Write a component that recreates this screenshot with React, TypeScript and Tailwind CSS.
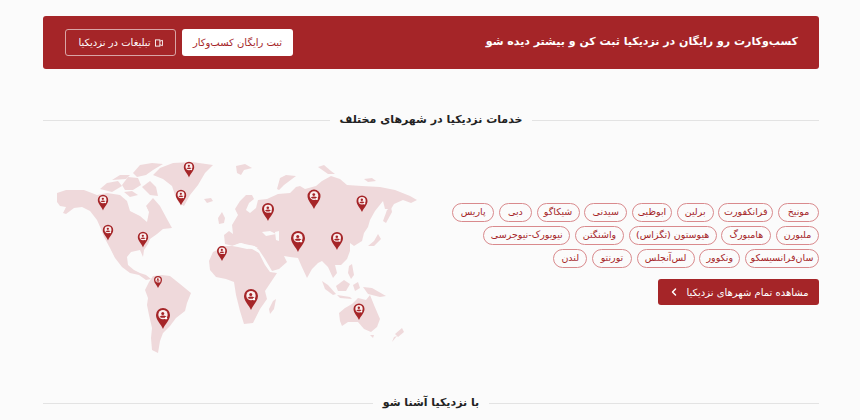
import { ChevronLeft } from 'lucide-react'

const chips = [
  { name: 'مونیخ', width: 'w-[41px]' },
  { name: 'فرانکفورت', width: 'w-[55px]' },
  { name: 'برلین', width: 'w-[37px]' },
  { name: 'ابوظبی', width: 'w-[40px]' },
  { name: 'سیدنی', width: 'w-[43px]' },
  { name: 'شیکاگو', width: 'w-[43px]' },
  { name: 'دبی', width: 'w-[33px]' },
  { name: 'پاریس', width: 'w-[42px]' },
  { name: 'ملبورن', width: 'w-[43px]' },
  { name: 'هامبورگ', width: 'w-[50px]' },
  { name: 'هیوستون (تگزاس)', width: 'w-[88px]' },
  { name: 'واشنگتن', width: 'w-[49px]' },
  { name: 'نیویورک-نیوجرسی', width: 'w-[87px]' },
  { name: 'سان‌فرانسیسکو', width: 'w-[74px]' },
  { name: 'ونکوور', width: 'w-[41px]' },
  { name: 'لس‌آنجلس', width: 'w-[58px]' },
  { name: 'تورنتو', width: 'w-[40px]' },
  { name: 'لندن', width: 'w-[34px]' },
]

// land shapes, numbers are page pixels (see viewBox on the svg)
const land = [
  // north america
  '57,190 66,187 84,187 97,192 107,190 120,192 127,198 130,208 140,213 147,219 149,209 146,203 153,195 160,203 167,216 172,225 163,226 157,231 150,236 148,241 144,247 143,254 140,247 131,249 127,254 128,262 134,267 140,270 146,272 151,276 146,277 139,272 130,270 122,264 115,255 110,245 104,234 101,226 97,217 90,208 82,204 74,205 66,211 63,210 66,204 60,203 57,199',
  // arctic islands
  '100,186 107,180 118,178 122,183 112,189',
  '122,182 128,174 138,175 141,182 133,187 125,187',
  '112,177 120,172 130,172 126,176',
  '133,170 140,162 152,160 163,161 153,167 146,172 137,174',
  '142,184 150,178 156,184 158,193 150,192',
  '124,189 132,188 138,192 130,194',
  // greenland
  '153,172 160,165 173,160 192,159 213,162 205,170 198,182 190,192 184,203 179,200 175,192 172,183 163,176',
  // iceland
  '204,196 211,195 213,198 207,200',
  // south america
  '145,287 149,279 153,273 162,272 170,273 180,281 191,290 187,300 185,308 176,315 170,323 163,330 160,338 158,350 152,347 151,335 152,325 149,312 147,302 148,295',
  // africa
  '209,258 213,249 225,243 238,243 252,246 259,250 265,262 270,269 277,270 271,279 265,288 267,296 260,306 253,320 244,321 240,308 236,292 234,279 226,276 216,274 210,267',
  // madagascar
  '273,298 276,296 274,306 270,311 269,306',
  // europe and asia
  '225,241 224,232 229,228 233,231 232,222 238,212 235,206 240,198 246,192 252,192 254,196 249,200 246,207 250,210 256,205 258,197 267,196 278,191 290,190 296,184 300,183 305,186 316,183 322,178 331,173 340,176 347,182 362,183 380,184 395,187 410,193 417,197 411,200 403,197 394,201 391,206 385,206 383,198 375,208 370,217 368,224 364,230 362,238 354,243 350,240 350,248 347,256 341,262 335,262 337,270 333,275 328,264 322,258 318,260 312,266 307,275 301,262 298,255 290,254 284,253 287,259 279,266 272,268 265,256 259,247 254,243 247,242 241,240 233,243',
  // russian arctic
  '280,175 286,172 296,173 284,182 279,187 277,186',
  '236,163 245,161 252,165 244,167 241,172 237,170',
  '318,164 324,162 331,168 335,171 328,171',
  '364,176 372,175 376,178 368,179',
  // japan and sakhalin
  '387,207 391,204 392,209 386,220 383,218',
  '368,243 374,238 378,231 381,236 374,243',
  // uk
  '218,215 222,209 225,215 224,220 219,221',
  // indonesia, philippines, png
  '322,278 328,282 336,291 333,292 325,286',
  '337,292 350,294 352,296 340,295',
  '336,283 344,277 350,281 346,288 338,288',
  '349,263 352,261 354,272 351,276 348,270',
  '353,282 358,279 360,285 355,288',
  '363,284 372,285 386,293 380,294 368,291',
  // australia
  '339,310 345,305 352,301 358,295 366,297 370,292 374,302 380,316 377,324 371,329 364,326 358,319 348,319 342,323 340,318',
  '370,332 374,332 373,335',
  // new zealand
  '402,325 404,329 398,334 395,331',
  '397,333 392,339 394,334',
]

const lakes = [
  '130,206 135,200 145,201 148,208 147,216 141,212',
  '232,243 240,240 254,243 258,245 247,246 238,244',
  '262,229 270,228 276,231 266,233',
  '275,229 279,228 279,238 276,237',
]

const pins = [
  { x: 103, y: 197, r: 5.2 },
  { x: 108, y: 227, r: 5.2 },
  { x: 143, y: 234, r: 5.2 },
  { x: 181, y: 192, r: 5.2 },
  { x: 189, y: 164, r: 5.2 },
  { x: 222, y: 248, r: 5 },
  { x: 268, y: 206, r: 6 },
  { x: 314, y: 193, r: 6.5 },
  { x: 362, y: 198, r: 5.5 },
  { x: 298, y: 235, r: 7 },
  { x: 337, y: 235, r: 6 },
  { x: 158, y: 277, r: 4 },
  { x: 163, y: 312, r: 7 },
  { x: 251, y: 293, r: 7 },
  { x: 359, y: 306, r: 5.5 },
]

function Pin({ x, y, r }: { x: number; y: number; r: number }) {
  return (
    <g transform={`translate(${x} ${y}) scale(${r / 6})`}>
      <path d="M0 12 C-1.5 8 -6 4.5 -6 0 A6 6 0 0 1 6 0 C6 4.5 1.5 8 0 12Z" fill="#a52528" />
      <circle cx="0" cy="-0.3" r="4" fill="#fbeeee" />
      <circle cx="-0.2" cy="-1.3" r="1.3" fill="#a52528" />
      <path d="M-3 1.4 Q0 -0.4 3 1.4 L1.5 2.4 L-1.5 2.4Z" fill="#a52528" />
      <circle cx="2.6" cy="2.7" r="1" fill="#fff" />
    </g>
  )
}

function SectionTitle({ children }: { children: string }) {
  return (
    <div className="flex items-center gap-[10px]">
      <div className="h-px flex-1 bg-[#e3e3e3]" />
      <h2 className="text-[11px] font-bold leading-5 text-[#222]">{children}</h2>
      <div className="h-px flex-1 bg-[#e3e3e3]" />
    </div>
  )
}

export default function App() {
  return (
    <div dir="rtl" className="h-[420px] w-[860px] overflow-hidden bg-[#fbfbfb] pt-4 pl-[43px] pr-[41px] font-['DejaVu_Sans','Noto_Sans',sans-serif]">
      {/* banner */}
      <div className="flex h-[53px] items-center justify-between rounded-[3px] bg-[#a52528] pr-[21px] pl-[22px]">
        <p className="text-[11px] font-bold text-white">کسب‌وکارت رو رایگان در نزدیکیا ثبت کن و بیشتر دیده شو</p>
        <div className="flex gap-[6px]">
          <button className="flex h-[27px] w-[111px] items-center justify-center rounded-[3px] bg-white text-[10px] text-[#a52528]">
            ثبت رایگان کسب‌وکار
          </button>
          <button className="flex h-[27px] w-[111px] items-center justify-center gap-1 rounded-[3px] border border-[#d9a5a6] text-[10px] text-white">
            <svg width="8" height="8" viewBox="0 0 9 9" fill="none" stroke="currentColor" strokeWidth="1">
              <rect x="0.5" y="1" width="5" height="7" />
              <path d="M5.5 2.5 L8.5 1.5 V7.5 L5.5 6.5" />
            </svg>
            تبلیغات در نزدیکیا
          </button>
        </div>
      </div>

      <div className="mt-[41px]">
        <SectionTitle>خدمات نزدیکیا در شهرهای مختلف</SectionTitle>
      </div>

      {/* cities + map */}
      <div className="mt-[23px] flex h-[215px] items-start justify-between">
        <div className="mt-[50px] w-[367px]">
          <div className="flex flex-wrap gap-x-[4.7px] gap-y-[4px]">
            {chips.map((c) => (
              <span
                key={c.name}
                className={`flex h-[19px] items-center justify-center whitespace-nowrap rounded-full border border-[#d98a8d] text-[9.5px] text-[#a52528] ${c.width}`}
              >
                {c.name}
              </span>
            ))}
          </div>
          <button className="mt-[11px] flex h-[26px] w-[161px] items-center justify-center gap-[6px] rounded-[3px] bg-[#a52528] text-[10px] text-white">
            مشاهده تمام شهرهای نزدیکیا
            <ChevronLeft className="h-3 w-3" strokeWidth={3} />
          </button>
        </div>
        <svg className="shrink-0 blur-[0.3px]" width="380" height="210" viewBox="43 150 380 210">
          {land.map((pts, i) => (
            <polygon key={i} points={pts} fill="#efd9db" />
          ))}
          {lakes.map((pts, i) => (
            <polygon key={i} points={pts} fill="#fbfbfb" />
          ))}
          {pins.map((p, i) => (
            <Pin key={i} {...p} />
          ))}
        </svg>
      </div>

      <div className="mt-[25px]">
        <SectionTitle>با نزدیکیا آشنا شو</SectionTitle>
      </div>
    </div>
  )
}
